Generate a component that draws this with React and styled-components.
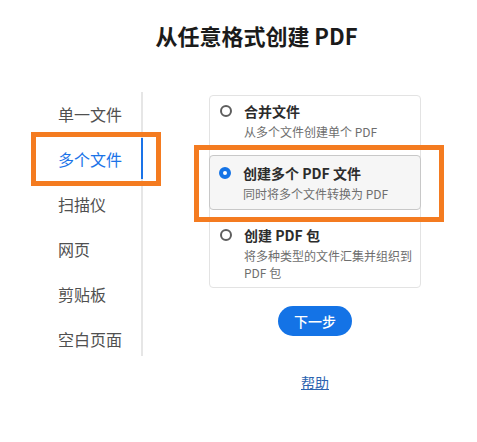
import React from "react";
import styled, { createGlobalStyle } from "styled-components";

const GlobalStyle = createGlobalStyle`
    body {
        margin: 0;
        background: #ffffff;
        font-family: "Noto Sans CJK SC", "Noto Sans", sans-serif;
    }
`;

const Page = styled.div`
    width: 477px;
    height: 442px;
    padding-top: 20px;
    box-sizing: border-box;
`;

const Title = styled.h1`
    margin: 0 0 0 36px;
    height: 30px;
    line-height: 30px;
    text-align: center;
    font-size: 22px;
    font-weight: 700;
    color: #1b1b1b;
`;

const Body = styled.div`
    display: flex;
    align-items: flex-start;
    margin-top: 42px;
`;

const Sidebar = styled.ul`
    list-style: none;
    margin: 0;
    width: 143px;
    box-sizing: border-box;
    padding: 11px 0 6px 58px;
    border-right: 2px solid #e6e6e6;
    display: flex;
    flex-direction: column;
    gap: 23px;
`;

const NavItem = styled.li`
    position: relative;
    height: 22px;
    line-height: 22px;
    font-size: 16px;
    color: ${p => (p.$active ? "#1a73e8" : "#505050")};

    &::after {
        content: "";
        display: ${p => (p.$active ? "block" : "none")};
        position: absolute;
        right: -2px;
        top: -10px;
        width: 2px;
        height: 41px;
        background: #1a73e8;
    }
`;

const Highlight = styled.span`
    position: absolute;
    left: ${p => p.$left}px;
    top: ${p => p.$top}px;
    width: ${p => p.$width}px;
    height: ${p => p.$height}px;
    box-sizing: border-box;
    border: 5px solid #f47b20;
    pointer-events: none;
`;

const Main = styled.div`
    margin: 3px 0 0 66px;
    width: 212px;
    display: flex;
    flex-direction: column;
    align-items: center;
`;

const Card = styled.div`
    width: 212px;
    box-sizing: border-box;
    border: 1px solid #e3e3e3;
    border-radius: 4px;
    padding-bottom: 1px;
    display: flex;
    flex-direction: column;
    gap: 10px;
`;

const Option = styled.div`
    position: relative;
    display: flex;
    gap: 12px;
    border: 1px solid ${p => (p.$selected ? "#c8c8c8" : "transparent")};
    border-radius: 4px;
    background: ${p => (p.$selected ? "#f6f6f6" : "transparent")};
    margin: 0 ${p => (p.$selected ? "-1px" : "0")};
    padding: ${p => (p.$selected ? "7px 6px 7px 9px" : "4px 6px 4px 9px")};
`;

const Radio = styled.span`
    flex: none;
    width: 12px;
    height: 12px;
    margin-top: 4px;
    box-sizing: border-box;
    border-radius: 50%;
    border: ${p => (p.$checked ? "4px solid #1473e6" : "2px solid #5e5e5e")};
    background: #ffffff;
`;

const OptionText = styled.div`
    display: flex;
    flex-direction: column;
    gap: 2px;
`;

const OptionTitle = styled.div`
    font-size: 14px;
    line-height: 20px;
    font-weight: 700;
    color: #2c2c2c;
`;

const OptionDesc = styled.div`
    font-size: 12px;
    line-height: 17px;
    color: #6e6e6e;
`;

const NextButton = styled.button`
    margin-top: 18px;
    width: 74px;
    height: 30px;
    border: none;
    border-radius: 15px;
    background: #1473e6;
    color: #ffffff;
    font-family: inherit;
    font-size: 14px;
    font-weight: 500;
`;

const HelpLink = styled.a`
    margin-top: 36px;
    font-size: 14px;
    line-height: 20px;
    color: #2c63b0;
    text-decoration: underline;
`;

const menu = ["单一文件", "多个文件", "扫描仪", "网页", "剪贴板", "空白页面"];

const options = [
    { title: "合并文件", desc: "从多个文件创建单个 PDF" },
    { title: "创建多个 PDF 文件", desc: "同时将多个文件转换为 PDF", selected: true },
    { title: "创建 PDF 包", desc: "将多种类型的文件汇集并组织到 PDF 包" },
];

const App = () => {
    return (
        <Page>
            <GlobalStyle />
            <Title>从任意格式创建 PDF</Title>
            <Body>
                <Sidebar>
                    {menu.map(item => (
                        <NavItem key={item} $active={item === "多个文件"}>
                            {item}
                            {item === "多个文件" && (
                                <Highlight $left={-27} $top={-16} $width={130} $height={54} />
                            )}
                        </NavItem>
                    ))}
                </Sidebar>
                <Main>
                    <Card>
                        {options.map(opt => (
                            <Option key={opt.title} $selected={opt.selected}>
                                <Radio $checked={opt.selected} />
                                <OptionText>
                                    <OptionTitle>{opt.title}</OptionTitle>
                                    <OptionDesc>{opt.desc}</OptionDesc>
                                </OptionText>
                                {opt.selected && (
                                    <Highlight $left={-16} $top={-11} $width={250} $height={77} />
                                )}
                            </Option>
                        ))}
                    </Card>
                    <NextButton>下一步</NextButton>
                    <HelpLink href="#">帮助</HelpLink>
                </Main>
            </Body>
        </Page>
    );
};

export default App;
